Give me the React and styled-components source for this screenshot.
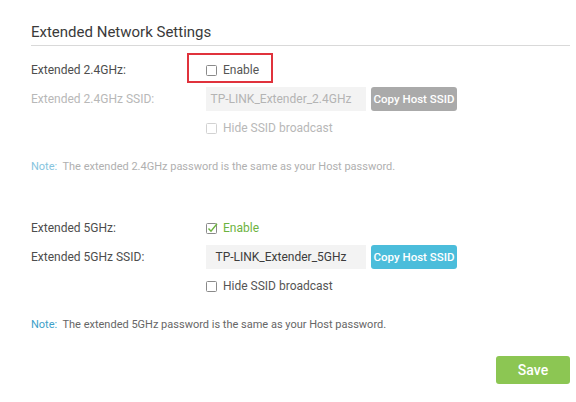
import React from "react";
import styled, { createGlobalStyle } from "styled-components";

const Global = createGlobalStyle`
  html, body { margin: 0; padding: 0; background: #fff; }
  body { font-family: Roboto, "Liberation Sans", sans-serif; }
`;

const Page = styled.div`
  width: 576px;
  height: 402px;
  box-sizing: border-box;
  padding: 22px 6px 0 31px;
  position: relative;
`;

const Title = styled.h2`
  margin: 0;
  font-size: 15px;
  font-weight: 400;
  line-height: 20px;
  color: #3a3a3a;
  padding-bottom: 3px;
  border-bottom: 1px solid #d9d9d9;
`;

const Section = styled.div`
  margin-top: ${(p) => p.$top}px;
  display: grid;
  grid-template-columns: 175px 1fr;
`;

const Label = styled.div`
  height: ${(p) => p.$h || 28}px;
  display: flex;
  align-items: center;
  font-size: 12px;
  color: ${(p) => (p.$disabled ? "#b8b8b8" : "#4d4d4d")};
`;

const Value = styled.div`
  height: ${(p) => p.$h || 28}px;
  display: flex;
  align-items: center;
  gap: 5px;
  position: relative;
`;

const CheckLabel = styled.span`
  font-size: 12px;
  color: ${(p) => p.$color};
`;

const Box = styled.svg`
  width: 13px;
  height: 13px;
  flex: none;
  margin-left: -1px;
`;

const Highlight = styled.div`
  position: absolute;
  left: -19px;
  top: -3px;
  width: 82px;
  height: 26px;
  border: 2px solid #e0323c;
`;

const Input = styled.div`
  width: 160px;
  height: 24px;
  box-sizing: border-box;
  background: #f3f3f3;
  padding-right: 10px;
  display: flex;
  align-items: center;
  justify-content: center;
  font-size: 12px;
  color: ${(p) => (p.$disabled ? "#b4b4b4" : "#3d3d3d")};
`;

const Button = styled.button`
  height: 24px;
  width: 86px;
  border: 0;
  border-radius: 3px;
  padding: 0;
  background: ${(p) => p.$bg};
  color: #fff;
  font-family: inherit;
  font-size: 11.5px;
  font-weight: 500;
  white-space: nowrap;
  cursor: pointer;
`;

const Note = styled.div`
  margin-top: 10px;
  height: 28px;
  display: flex;
  align-items: center;
  font-size: 11px;
  color: ${(p) => (p.$disabled ? "#b0b0b0" : "#666")};
  white-space: pre;
`;

const NoteTag = styled.span`
  color: ${(p) => (p.$disabled ? "#86c4de" : "#3d9fc9")};
`;

const Footer = styled.div`
  margin-top: 18px;
  display: flex;
  justify-content: flex-end;
`;

const Save = styled.button`
  width: 74px;
  height: 28px;
  border: 0;
  border-radius: 3px;
  background: #8cc653;
  color: #fff;
  font-family: inherit;
  font-size: 14px;
  font-weight: 500;
`;

function CheckBox({ checked, disabled }) {
  const stroke = disabled ? "#d2d2d2" : "#8a8a8a";
  return (
    <Box viewBox="0 0 13 13">
      <rect x="1.5" y="1.5" width="10" height="10" rx="1" fill="#fff" stroke={stroke} />
      {checked && (
        <path d="M3.5 6.5 L6 9.2 L12 1.8" fill="none" stroke="#6db33f" strokeWidth="1.4" />
      )}
    </Box>
  );
}

function Band({ top, name, ssid, enabled, highlight, disabled, note }) {
  return (
    <>
      <Section $top={top}>
        <Label>Extended {name}:</Label>
        <Value>
          {highlight && <Highlight />}
          <CheckBox checked={enabled} />
          <CheckLabel $color={enabled ? "#6db33f" : "#555"}>Enable</CheckLabel>
        </Value>
        <Label $h={30} $disabled={disabled}>Extended {name} SSID:</Label>
        <Value $h={30}>
          <Input $disabled={disabled}>{ssid}</Input>
          <Button $bg={disabled ? "#aaaaaa" : "#4bbddb"}>Copy Host SSID</Button>
        </Value>
        <div />
        <Value>
          <CheckBox disabled={disabled} />
          <CheckLabel $color={disabled ? "#b8b8b8" : "#555"}>Hide SSID broadcast</CheckLabel>
        </Value>
      </Section>
      <Note $disabled={disabled}>
        <NoteTag $disabled={disabled}>Note:</NoteTag>
        {"  " + note}
      </Note>
    </>
  );
}

export default function App() {
  return (
    <>
      <Global />
      <Page>
        <Title>Extended Network Settings</Title>
        <Band
          top={10}
          name="2.4GHz"
          ssid="TP-LINK_Extender_2.4GHz"
          enabled={false}
          highlight
          disabled
          note="The extended 2.4GHz password is the same as your Host password."
        />
        <Band
          top={34}
          name="5GHz"
          ssid="TP-LINK_Extender_5GHz"
          enabled
          note="The extended 5GHz password is the same as your Host password."
        />
        <Footer>
          <Save>Save</Save>
        </Footer>
      </Page>
    </>
  );
}
